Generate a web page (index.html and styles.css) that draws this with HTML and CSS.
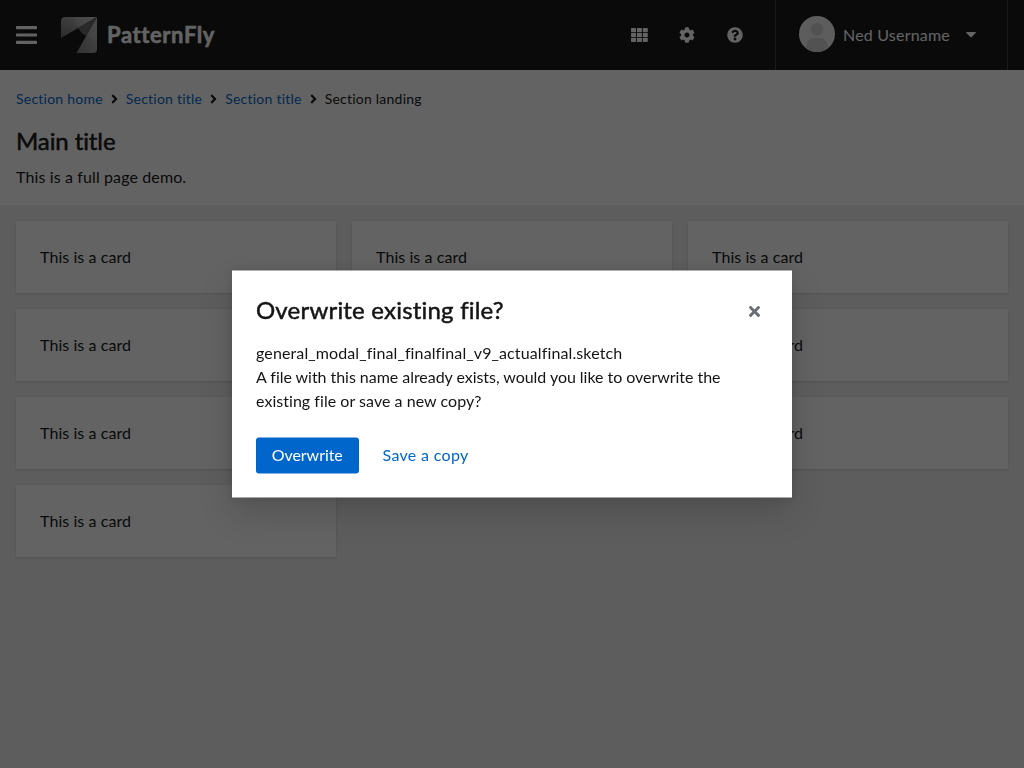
FILE: index.html
```
<!DOCTYPE html>
<html lang="en">
<head>
<meta charset="utf-8">
<title>PatternFly</title>
<link rel="stylesheet" href="styles.css">
</head>
<body>
<div class="page">
  <header class="header">
    <button class="toggle" aria-label="Navigation">
      <svg width="21" height="18" viewBox="0 0 21 18"><rect width="21" height="3.2" rx=".7"/><rect y="7.4" width="21" height="3.2" rx=".7"/><rect y="14.8" width="21" height="3.2" rx=".7"/></svg>
    </button>
    <div class="brand">
      <svg width="36" height="36" viewBox="0 0 36 36">
        <defs>
          <linearGradient id="wing" x1="0" y1="1" x2="1" y2="0"><stop offset="0" stop-color="#6d6d6d"/><stop offset="1" stop-color="#c4c4c4"/></linearGradient>
          <linearGradient id="tail" x1="0" y1="1" x2="1" y2="0"><stop offset="0" stop-color="#808080"/><stop offset="1" stop-color="#b8b8b8"/></linearGradient>
          <clipPath id="ring"><circle cx="36" cy="0" r="22"/></clipPath>
        </defs>
        <path d="M4 0H36L0 21V4Q0 0 4 0Z" fill="url(#wing)"/>
        <path d="M36 0V32Q36 36 32 36H15.500Z" fill="url(#tail)"/>
        <g clip-path="url(#ring)">
          <path d="M36 0L0 21L15.500 36Z" fill="#686868"/>
          <path d="M0 0H36L0 21ZM36 0V36H15.500Z" fill="#fff" opacity=".12"/>
        </g>
      </svg>
      <span class="wordmark">PatternFly</span>
    </div>
    <nav class="tools">
      <button class="tool" aria-label="Applications"><svg width="17" height="14" viewBox="0 0 17 14"><g id="row"><rect width="5" height="4.200" rx=".7"/><rect x="5.900" width="5" height="4.200" rx=".7"/><rect x="11.800" width="5" height="4.200" rx=".7"/></g><use href="#row" y="4.900"/><use href="#row" y="9.800"/></svg></button>
      <button class="tool" aria-label="Settings"><svg width="16" height="16" viewBox="0 0 512 512"><path d="M487.4 315.7l-42.6-24.6c4.3-23.2 4.3-47 0-70.2l42.6-24.6c4.9-2.8 7.1-8.6 5.5-14-11.1-35.6-30-67.8-54.7-94.6-3.8-4.1-10-5.1-14.8-2.3L380.8 110c-17.9-15.4-38.5-27.3-60.8-35.1V25.8c0-5.6-3.9-10.5-9.4-11.7-36.7-8.2-74.3-7.8-109.2 0-5.5 1.2-9.4 6.1-9.4 11.700V75c-22.2 7.900-42.8 19.800-60.8 35.100L88.700 85.500c-4.900-2.800-11-1.900-14.800 2.300-24.700 26.700-43.600 58.900-54.700 94.600-1.700 5.400.6 11.200 5.500 14L67.300 221c-4.300 23.200-4.300 47 0 70.200l-42.600 24.600c-4.900 2.800-7.100 8.600-5.500 14 11.100 35.600 30 67.800 54.700 94.600 3.800 4.100 10 5.100 14.800 2.300l42.600-24.600c17.900 15.400 38.500 27.300 60.800 35.100v49.200c0 5.600 3.900 10.500 9.400 11.700 36.700 8.200 74.300 7.800 109.200 0 5.500-1.200 9.400-6.100 9.400-11.700v-49.200c22.200-7.900 42.800-19.800 60.800-35.100l42.600 24.600c4.900 2.800 11 1.900 14.800-2.300 24.700-26.700 43.600-58.900 54.700-94.600 1.500-5.500-.7-11.300-5.600-14.100zM256 336c-44.100 0-80-35.900-80-80s35.900-80 80-80 80 35.900 80 80-35.900 80-80 80z"/></svg></button>
      <button class="tool" aria-label="Help"><svg width="16" height="16" viewBox="0 0 512 512"><path d="M504 256c0 136.997-111.043 248-248 248S8 392.997 8 256C8 119.083 119.043 8 256 8s248 111.083 248 248zM262.655 90c-54.497 0-89.255 22.957-116.549 63.758-3.536 5.286-2.353 12.415 2.715 16.258l34.699 26.310c5.205 3.947 12.621 3.008 16.665-2.122 17.864-22.658 30.113-35.797 57.303-35.797 20.429 0 45.698 13.148 45.698 32.958 0 14.976-12.363 22.667-32.534 33.976C247.128 238.528 216 254.941 216 296v4c0 6.627 5.373 12 12 12h56c6.627 0 12-5.373 12-12v-1.333c0-28.462 83.186-29.647 83.186-106.667 0-58.002-60.165-102-116.531-102zM256 338c-25.365 0-46 20.635-46 46 0 25.364 20.635 46 46 46s46-20.636 46-46c0-25.365-20.635-46-46-46z"/></svg></button>
    </nav>
    <div class="user">
      <svg class="avatar" width="36" height="36" viewBox="0 0 36 36"><defs><clipPath id="face"><circle cx="18" cy="18" r="18"/></clipPath></defs><g clip-path="url(#face)"><path d="M0 0H36V36H0Z" fill="#f0f0f0"/><circle cx="17.900" cy="13.300" r="6.300" fill="#d2d2d2"/><path d="M6 36C7 26 10 22 14 22H22C26 22 29 26 30 36Z" fill="#d2d2d2"/><path d="M12 31L13 36H11ZM24.500 31L25 36H23Z" fill="#b8bbbe"/></g></svg>
      <span class="username">Ned Username</span>
      <svg class="caret" width="10" height="6" viewBox="0 0 10 6"><path d="M.8 0H9.200Q10.300.1 9.600 1L5.700 5Q5 5.700 4.300 5L.4 1Q-.3.1.8 0Z"/></svg>
    </div>
  </header>
  <section class="intro">
    <nav class="crumbs">
      <a class="crumb">Section home</a><svg class="angle" width="7" height="14" viewBox="0 0 256 512"><path id="angle" d="M224.300 273l-136 136c-9.400 9.400-24.600 9.400-33.900 0l-22.600-22.600c-9.400-9.400-9.400-24.600 0-33.900l96.400-96.400-96.400-96.400c-9.400-9.400-9.400-24.600 0-33.900L54.300 103c9.400-9.400 24.600-9.400 33.900 0l136 136c9.500 9.400 9.500 24.600.1 34z"/></svg>
      <a class="crumb">Section title</a><svg class="angle" width="7" height="14" viewBox="0 0 256 512"><use href="#angle"/></svg>
      <a class="crumb">Section title</a><svg class="angle" width="7" height="14" viewBox="0 0 256 512"><use href="#angle"/></svg>
      <span class="crumb current">Section landing</span>
    </nav>
    <h1 class="title">Main title</h1>
    <p class="lead">This is a full page demo.</p>
  </section>
  <main class="gallery">
    <article class="card">This is a card</article>
    <article class="card">This is a card</article>
    <article class="card">This is a card</article>
    <article class="card">This is a card</article>
    <article class="card"></article>
    <article class="card">This is a card</article>
    <article class="card">This is a card</article>
    <article class="card"></article>
    <article class="card">This is a card</article>
    <article class="card">This is a card</article>
  </main>
</div>
<div class="backdrop">
  <div class="modal" role="dialog">
    <div class="modal-head">
      <h2 class="modal-title">Overwrite existing file?</h2>
      <button class="close" aria-label="Close"><svg width="11" height="16" viewBox="0 0 352 512"><path d="M242.720 256l100.070-100.070c12.280-12.280 12.280-32.190 0-44.480l-22.240-22.240c-12.280-12.280-32.190-12.280-44.480 0L176 189.280 75.930 89.210c-12.280-12.280-32.190-12.280-44.480 0L9.210 111.450c-12.280 12.280-12.280 32.190 0 44.480L109.280 256 9.210 356.070c-12.280 12.280-12.280 32.190 0 44.480l22.240 22.240c12.280 12.280 32.200 12.280 44.480 0L176 322.720l100.070 100.070c12.280 12.280 32.200 12.280 44.480 0l22.240-22.240c12.280-12.280 12.280-32.190 0-44.480L242.720 256z"/></svg></button>
    </div>
    <div class="modal-body"><span class="file">general_modal_final_finalfinal_v9_actualfinal.sketch</span><br><span class="line">A file with this name already exists, would you like to overwrite the</span><br><span class="line second">existing file or save a new copy?</span></div>
    <div class="modal-foot">
      <button class="primary">Overwrite</button>
      <button class="link">Save a copy</button>
    </div>
  </div>
</div>
</body>
</html>
```
FILE: styles.css
```
* { box-sizing: border-box; margin: 0; padding: 0; }
body { font: 16px/24px Lato, "Noto Sans", sans-serif; font-variant-ligatures: none; color: #151515; background: #f0f0f0; overflow: hidden; }
button { border: 0; background: none; font: inherit; color: inherit; letter-spacing: inherit; }
svg { display: block; flex: none; fill: currentColor; }
.page { height: 768px; }
.header { display: flex; align-items: center; height: 70px; padding-left: 16px; background: #151515; color: #fff; }
.toggle { margin-right: 24px; }
.brand { display: flex; align-items: center; gap: 10px; }
.wordmark { font-size: 22px; font-weight: 700; letter-spacing: .6px; white-space: nowrap; -webkit-text-stroke: .5px; }
.tools { display: flex; margin-left: auto; margin-right: 16px; }
.tool { display: grid; place-items: center; width: 48px; height: 36px; }
.user { display: flex; align-items: center; width: 233px; height: 70px; margin-right: 16px; padding-left: 23px; border: solid #3c3f42; border-width: 0 1px; }
.avatar { margin: 0 8px 0 0; transform: translateY(-1px); }
.username { width: 107px; margin-right: 16px; white-space: nowrap; letter-spacing: .2px; }
.intro { height: 135px; padding: 16px; background: #fff; }
.crumbs { display: flex; align-items: center; height: 26px; margin-bottom: 13px; font-size: 14px; letter-spacing: .23px; }
.crumb { color: #06c; white-space: nowrap; }
.current { color: #151515; }
.angle { margin: 0 8px; }
.title { font-size: 24px; font-weight: 400; line-height: 31px; margin-bottom: 9px; letter-spacing: -.1px; -webkit-text-stroke: .5px; }
.lead { letter-spacing: .12px; }
.gallery { display: grid; grid-template-columns: repeat(3, 1fr); gap: 16px; padding: 16px; }
.card { height: 72px; padding: 24px; background: #fff; letter-spacing: .07px; box-shadow: 0 1px 2px rgba(3,3,3,.12), 0 0 2px rgba(3,3,3,.06); }
.backdrop { position: fixed; inset: 0; display: flex; align-items: center; justify-content: center; background: rgba(3,3,3,.62); }
.modal { width: 560px; height: 227px; margin-bottom: 1px; padding: 24px; background: #fff; box-shadow: 0 16px 32px rgba(3,3,3,.16), 0 0 8px rgba(3,3,3,.1); transform: translateY(.49px); }
.modal-head { display: flex; align-items: center; justify-content: space-between; height: 34px; margin-bottom: 13px; padding-right: 8px; }
.modal-title { height: 35px; font-size: 24px; font-weight: 400; line-height: 31px; letter-spacing: .2px; -webkit-text-stroke: .5px; }
.close { color: #6a6e73; }
.modal-body { height: 72px; margin-bottom: 24px; white-space: nowrap; }
.file { letter-spacing: .12px; }
.line { letter-spacing: -.04px; }
.second { letter-spacing: .04px; }
.modal-foot { display: flex; gap: 8px; }
.primary { width: 102.5px; height: 36px; border-radius: 3px; background: #06c; color: #fff; letter-spacing: -.05px; }
.link { padding: 0 16px; height: 36px; color: #06c; letter-spacing: .33px; }
```
